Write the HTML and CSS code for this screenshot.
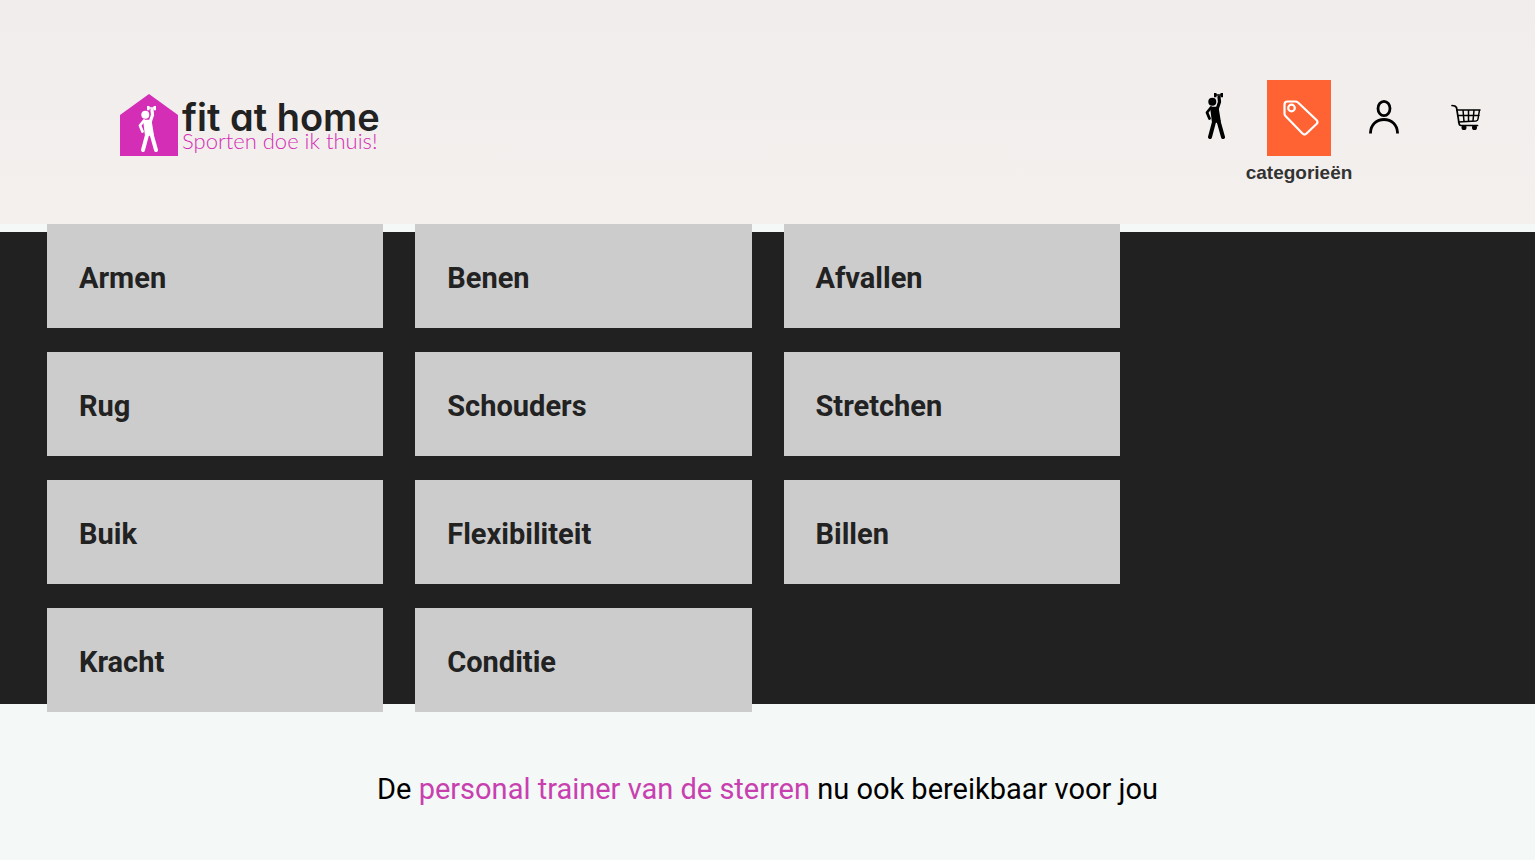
FILE: index.html
```html
<!DOCTYPE html>
<html lang="nl">
  <head>
    <meta charset="UTF-8" />
    <meta name="viewport" content="width=device-width, initial-scale=1.0" />
    <title>Fit at home</title>
    <link rel="stylesheet" href="styles.css">
  </head>

  <body>
    <header class="header">
      <a href="#" class="logo">
        <svg class="logo-house" viewBox="0 0 60 63">
          <path d="M30 1L59 22V63H1V22Z" fill="#d32eb5" />
          <svg x="19" y="12" width="20" height="48" viewBox="0 0 20 48" color="#fff">
            <use href="#trainer" />
          </svg>
        </svg>
        <span class="logo-text">
          <span class="logo-name">fit at home</span>
          <span class="logo-slogan">Sporten doe ik thuis!</span>
        </span>
      </a>
      <nav class="nav">
        <a href="#" class="nav-item" aria-label="oefeningen">
          <svg class="icon-trainer" viewBox="0 0 20 52">
            <g id="trainer" fill="none" stroke="currentColor" stroke-linecap="round" stroke-linejoin="round">
              <circle cx="7.3" cy="9.7" r="4" fill="currentColor" stroke="none" />
              <path d="M9 1h2.500v1.300h4V1H18v4.200h-2.500V3.800h-4v1.400H9Z" fill="currentColor" stroke="none" />
              <path d="M14 5L14.500 10L12.500 16" stroke-width="3.200" />
              <path d="M6 15.500L2 20.500L4.500 26.500" stroke-width="2.800" />
              <path d="M7 16.500H12L14 29H8.500Z" fill="currentColor" stroke-width="3.500" />
              <path d="M9 30L5 45M13.500 29L18 45" stroke-width="4" />
            </g>
          </svg>
        </a>
        <a href="#" class="nav-item active">
          <svg class="icon" viewBox="-2 0 40 40">
            <g fill="none" stroke="#fff" stroke-width="2.200" stroke-linejoin="round">
              <path d="M6.500 3.500H14.500Q16 3.500 17 4.500L35.500 22Q37.500 24 35.500 26L25.500 35.500Q23.500 37.500 21.500 35.500L4.500 18Q3.500 17 3.500 15.500V6.500Q3.500 3.500 6.500 3.500Z" />
              <circle cx="10.500" cy="10" r="3.300" />
            </g>
          </svg>
          <span class="nav-label">categorieën</span>
        </a>
        <a href="#" class="nav-item" aria-label="account">
          <svg class="icon" viewBox="-1 0 40 40">
            <g fill="none" stroke="#000" stroke-width="2.800">
              <ellipse cx="20" cy="10.500" rx="6" ry="7.200" />
              <path d="M6.500 35.500V34.500C7 26.500 12.500 21.500 20 21.500S33 26.500 33.500 34.500V35.500" />
            </g>
          </svg>
        </a>
        <a href="#" class="nav-item" aria-label="winkelwagen">
          <svg class="icon" viewBox="1 0 40 40">
            <g fill="none" stroke="#000" stroke-width="1.500" stroke-linecap="round" stroke-linejoin="round">
              <path d="M6 7.500Q9.500 7.500 10.500 9.500L13 25Q13.200 27.500 15 27.500H31.500" stroke-width="1.700" />
              <path d="M11 12H34M12 17.500H33M12.500 24L30 23Q31.800 22.800 32 21L33.500 12M17 12L18 23.500M22.500 12V23.500M28 12L27 23" />
              <circle cx="18" cy="29.500" r="1.800" fill="#000" />
              <circle cx="28.500" cy="29.500" r="1.800" fill="#000" />
            </g>
          </svg>
        </a>
      </nav>
    </header>

    <main>
      <section class="categories">
        <div class="grid">
          <a href="#" class="category">Armen</a>
          <a href="#" class="category">Benen</a>
          <a href="#" class="category">Afvallen</a>
          <a href="#" class="category first">Rug</a>
          <a href="#" class="category">Schouders</a>
          <a href="#" class="category">Stretchen</a>
          <a href="#" class="category first">Buik</a>
          <a href="#" class="category">Flexibiliteit</a>
          <a href="#" class="category">Billen</a>
          <a href="#" class="category first">Kracht</a>
          <a href="#" class="category">Conditie</a>
        </div>
      </section>
      <p class="intro">De <span>personal trainer van de sterren</span> nu ook bereikbaar voor jou</p>
    </main>
  </body>
</html>
```
FILE: styles.css
```css
* {
  margin: 0;
  padding: 0;
  box-sizing: border-box;
}

body {
  background: #f4f8f7;
  font-family: Roboto, sans-serif;
}

a {
  color: inherit;
  text-decoration: none;
}

.header {
  display: flex;
  align-items: flex-start;
  justify-content: space-between;
  padding: 80px 36px 68px 119px;
  background: linear-gradient(#f0edec, #f4f0ee);
}

.logo {
  display: flex;
  gap: 3px;
  padding-top: 13px;
}

.logo-house {
  width: 60px;
  height: 63px;
}

.logo-text {
  display: flex;
  flex-direction: column;
  padding-top: 8px;
  white-space: nowrap;
}

.logo-name {
  font-family: Inter, sans-serif;
  font-size: 38px;
  font-weight: 600;
  font-feature-settings: 'cv11';
  line-height: 32px;
  color: #222;
}

.logo-slogan {
  font-family: Lato, sans-serif;
  font-size: 22px;
  font-weight: 300;
  line-height: 16px;
  color: #d32eb5;
}

.nav {
  display: flex;
  gap: 20px;
}

.nav-item {
  position: relative;
  display: flex;
  align-items: center;
  justify-content: center;
  width: 64px;
  height: 76px;
}

.active {
  background: #ff6333;
}

.icon {
  width: 40px;
  height: 40px;
}

.icon-trainer {
  width: 20px;
  height: 52px;
}

.nav-label {
  position: absolute;
  top: 100%;
  left: 50%;
  transform: translateX(-50%);
  margin-top: 5px;
  font-family: 'Liberation Sans', Arial, sans-serif;
  font-size: 19px;
  font-weight: 700;
  line-height: 24px;
  color: #333;
}

.categories {
  display: flow-root;
  margin: 8px 0;
  background: #212121;
}

/* tiles stick out of the dark bar at the top and bottom */
.grid {
  display: grid;
  grid-template-columns: repeat(4, 1fr);
  gap: 24px 32px;
  max-width: 1441px;
  margin: -8px auto;
}

.category {
  padding: 34px 32px 30px;
  background: #ccc;
  font-size: 29px;
  font-weight: 700;
  line-height: 40px;
  color: #222;
}

.first {
  grid-column-start: 1;
}

.intro {
  padding: 57px 16px 51px;
  font-size: 29px;
  line-height: 40px;
  text-align: center;
}

.intro span {
  color: #c840b0;
}
```
